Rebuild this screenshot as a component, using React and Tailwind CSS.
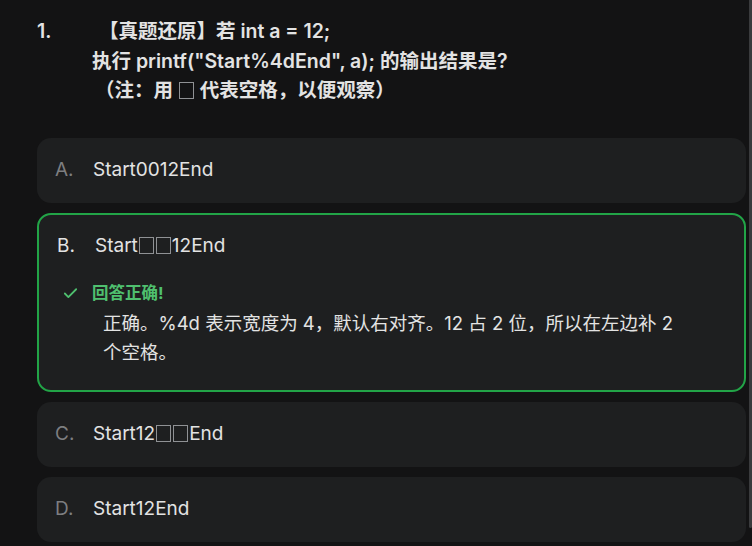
import React from 'react';
import { Check } from 'lucide-react';

const font = { fontFamily: 'Inter, "Noto Sans CJK SC", sans-serif' };

// 用边框画出代表空格的方块，字符本身保留为文本
const Box = () => (
  <span className="inline-block w-[15px] h-[17px] mx-[1px] align-[-2px] border-[1.5px] border-[#8f9194] text-transparent text-[1px] leading-none overflow-hidden">
    □
  </span>
);

const renderText = (s) =>
  s.split('□').flatMap((part, i) => (i === 0 ? [part] : [<Box key={i} />, part]));

const options = [
  { key: 'A', text: 'Start0012End' },
  { key: 'B', text: 'Start□□12End', correct: true },
  { key: 'C', text: 'Start12□□End' },
  { key: 'D', text: 'Start12End' },
];

const Option = ({ item }) => {
  if (item.correct) {
    return (
      <div className="rounded-[14px] border-2 border-[#22a447] bg-[#1e1f20] px-[18px] pt-[17px] pb-[23px]">
        <div className="flex items-center h-[29px] text-[19px] text-[#e3e3e3]">
          <span className="w-[38px] text-[#e3e3e3]">{item.key}.</span>
          <span>{renderText(item.text)}</span>
        </div>
        <div className="mt-[21px] flex items-center gap-[13px] pl-[5px] h-[24px]">
          <Check size={17} strokeWidth={2.5} className="text-[#4fc06f]" />
          <span className="text-[16.5px] font-bold text-[#4fc06f]">回答正确!</span>
        </div>
        <p className="mt-[3px] pl-[46px] pr-[36px] text-[18.5px] leading-[29px] text-[#e3e3e3]">
          正确。%4d 表示宽度为 4，默认右对齐。12 占 2 位，所以在左边补 2 个空格。
        </p>
      </div>
    );
  }
  return (
    <div className="rounded-[14px] border-2 border-transparent bg-[#1e1f20] px-[16px] py-[16px]">
      <div className="flex items-center h-[29px] text-[19px] text-[#e3e3e3]">
        <span className="w-[38px] text-[#7d7e80]">{item.key}.</span>
        <span>{renderText(item.text)}</span>
      </div>
    </div>
  );
};

export default function App() {
  return (
    <div className="relative min-h-[546px] w-[752px] overflow-hidden bg-[#131314]" style={font}>
      <div className="pl-[37px] pr-[6px] pt-[17px]">
        {/* Question */}
        <div className="flex text-[19.5px] leading-[29.5px] font-semibold text-[#e3e3e3]">
          <span className="w-[55px] shrink-0">1.</span>
          <div>
            <div className="ml-[7px]">【真题还原】若 int a = 12;</div>
            <div>执行 printf("Start%4dEnd", a); 的输出结果是?</div>
            <div className="ml-[3px]">（注：用 <Box /> 代表空格，以便观察）</div>
          </div>
        </div>

        {/* Options */}
        <div className="mt-[32px] flex flex-col gap-[10px]">
          {options.map((o) => (
            <Option key={o.key} item={o} />
          ))}
        </div>
      </div>
      {/* scrollbar thumb */}
      <div className="absolute right-0 top-0 h-[528px] w-[3px] rounded-b-full bg-[#3a3b3d]" />
    </div>
  );
}
